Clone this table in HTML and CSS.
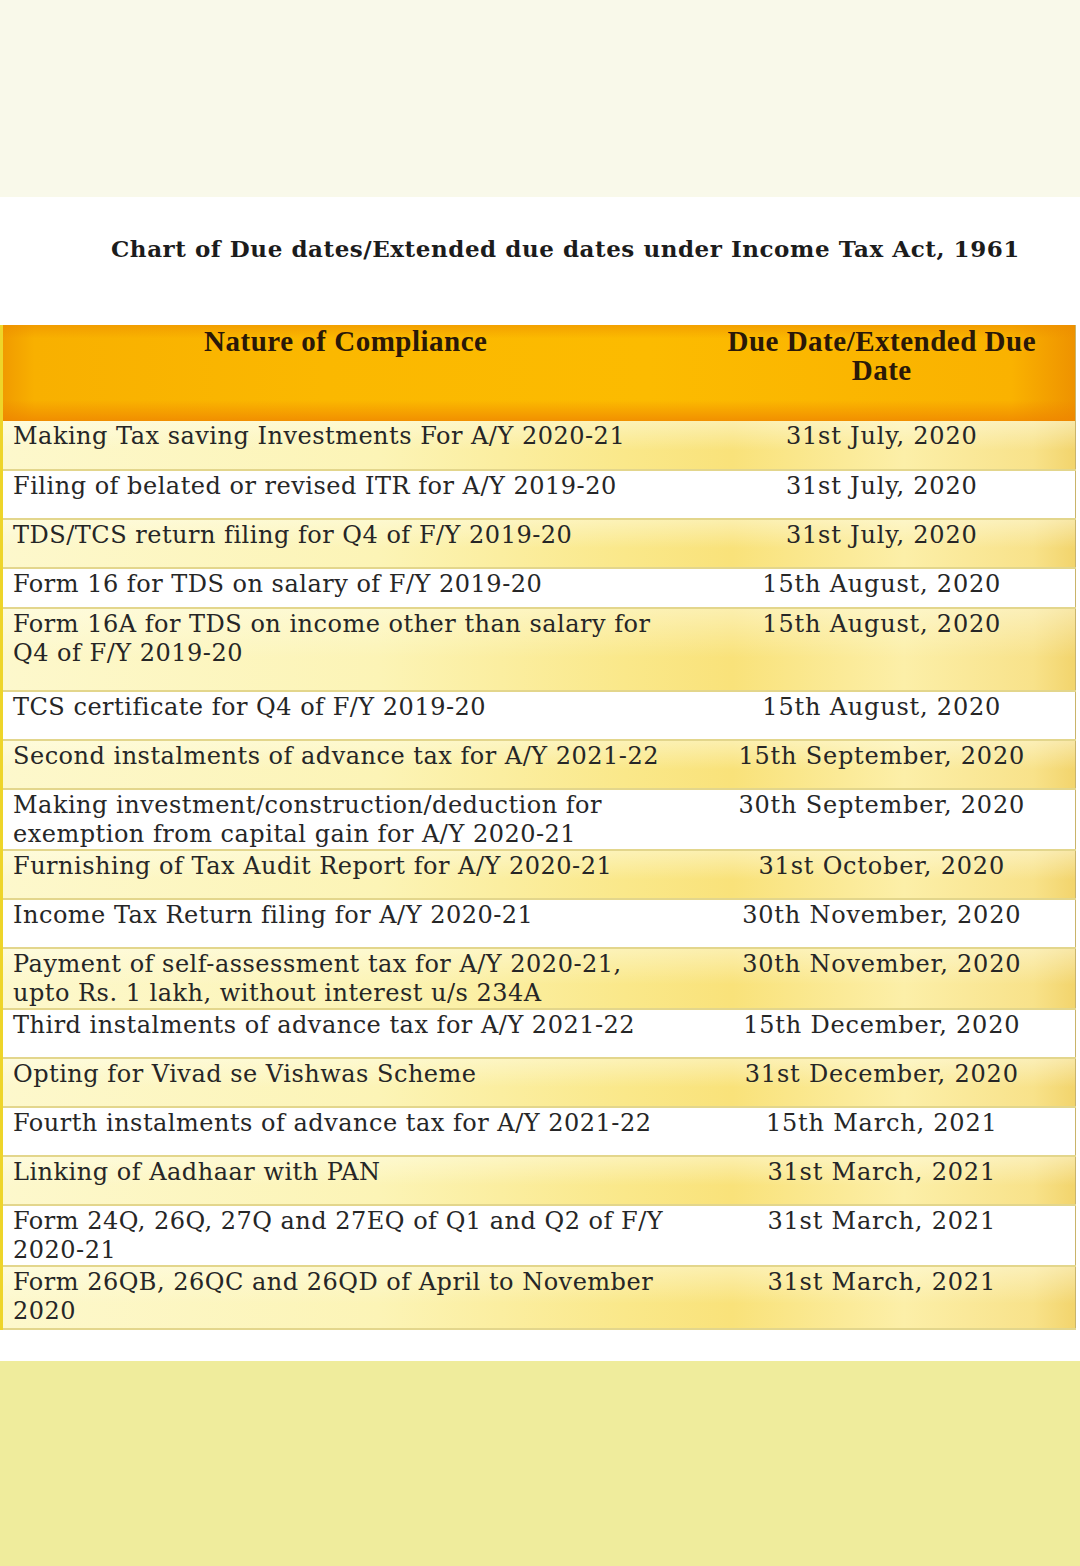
FILE: index.html
```html
<!DOCTYPE html>
<html lang="en">
<head>
<meta charset="utf-8">
<title>Chart of Due dates</title>
<link rel="stylesheet" href="styles.css">
</head>
<body>
<div class="page">
  <div class="top-band"></div>
  <div class="sheet">
    <h1 class="title">Chart of Due dates/Extended due dates under Income Tax Act, 1961</h1>
    <table class="chart">
      <thead>
        <tr class="head-row">
          <th class="col-nature">Nature of Compliance</th>
          <th class="col-date">Due Date/Extended Due Date</th>
        </tr>
      </thead>
      <tbody>
        <tr class="row yellow"><td>Making Tax saving Investments For A/Y 2020-21</td><td class="date">31st July, 2020</td></tr>
        <tr class="row white"><td>Filing of belated or revised ITR for A/Y 2019-20</td><td class="date">31st July, 2020</td></tr>
        <tr class="row yellow"><td>TDS/TCS return filing for Q4 of F/Y 2019-20</td><td class="date">31st July, 2020</td></tr>
        <tr class="row white short"><td>Form 16 for TDS on salary of F/Y 2019-20</td><td class="date">15th August, 2020</td></tr>
        <tr class="row yellow tall"><td>Form 16A for TDS on income other than salary for Q4 of F/Y 2019-20</td><td class="date">15th August, 2020</td></tr>
        <tr class="row white"><td>TCS certificate for Q4 of F/Y 2019-20</td><td class="date">15th August, 2020</td></tr>
        <tr class="row yellow"><td>Second instalments of advance tax for A/Y 2021-22</td><td class="date">15th September, 2020</td></tr>
        <tr class="row white two"><td>Making investment/construction/deduction for exemption from capital gain for A/Y 2020-21</td><td class="date">30th September, 2020</td></tr>
        <tr class="row yellow"><td>Furnishing of Tax Audit Report for A/Y 2020-21</td><td class="date">31st October, 2020</td></tr>
        <tr class="row white"><td>Income Tax Return filing for A/Y 2020-21</td><td class="date">30th November, 2020</td></tr>
        <tr class="row yellow two"><td>Payment of self-assessment tax for A/Y 2020-21, upto Rs. 1 lakh, without interest u/s 234A</td><td class="date">30th November, 2020</td></tr>
        <tr class="row white"><td>Third instalments of advance tax for A/Y 2021-22</td><td class="date">15th December, 2020</td></tr>
        <tr class="row yellow"><td>Opting for Vivad se Vishwas Scheme</td><td class="date">31st December, 2020</td></tr>
        <tr class="row white"><td>Fourth instalments of advance tax for A/Y 2021-22</td><td class="date">15th March, 2021</td></tr>
        <tr class="row yellow"><td>Linking of Aadhaar with PAN</td><td class="date">31st March, 2021</td></tr>
        <tr class="row white two"><td>Form 24Q, 26Q, 27Q and 27EQ of Q1 and Q2 of F/Y 2020-21</td><td class="date">31st March, 2021</td></tr>
        <tr class="row yellow two last"><td>Form 26QB, 26QC and 26QD of April to November 2020</td><td class="date">31st March, 2021</td></tr>
      </tbody>
    </table>
  </div>
  <div class="bottom-band"></div>
</div>
</body>
</html>
```

FILE: styles.css
```css
html, body {
  margin: 0;
  padding: 0;
}
body {
  width: 1080px;
  height: 1566px;
  overflow: hidden;
  background: #efec9c;
  font-family: "DejaVu Serif", "Liberation Serif", serif;
  color: #262626;
}
.page {
  display: flex;
  flex-direction: column;
  height: 1566px;
}
.top-band {
  height: 197px;
  background: #f9f9ea;
  flex: none;
}
.sheet {
  background: #ffffff;
  padding: 35px 4px 31px 0;
  flex: none;
}
.title {
  margin: 0 0 59px 111px;
  font-family: "DejaVu Serif", serif;
  font-weight: bold;
  font-size: 23px;
  line-height: 34px;
  color: #1c1c1c;
  letter-spacing: 0.55px;
  white-space: nowrap;
}
.chart {
  width: 1076px;
  border-collapse: collapse;
  border-left: 3px solid #eed52a;
  border-right: 1px solid #c9b46a;
  table-layout: fixed;
}
.col-nature {
  width: 687px;
}
.head-row th {
  height: 96px;
  padding: 2px 12px 0;
  vertical-align: top;
  font-family: "Liberation Serif", "Times New Roman", serif;
  font-weight: bold;
  font-size: 29px;
  line-height: 29px;
  letter-spacing: 0.5px;
  color: #2a1808;
  text-align: center;
  box-sizing: border-box;
}
.head-row {
  background:
    linear-gradient(to bottom, rgba(236, 140, 0, 0.55) 0, rgba(246, 170, 0, 0) 14%, rgba(246, 170, 0, 0) 78%, rgba(238, 130, 0, 0.75) 100%),
    linear-gradient(to right, #f09a00 0, #f8b000 3%, #fbb800 30%, #fcbb00 60%, #fab200 94%, #ee9200 100%);
}
.head-row .col-date {
  padding: 2px 14px 0 14px;
}
.row td {
  padding: 1px 10px 0 10px;
  vertical-align: top;
  font-size: 24px;
  line-height: 29px;
  letter-spacing: 0.5px;
  border-bottom: 2px solid #e3d68c;
}
.row td.date {
  text-align: center;
  padding: 1px 4px 0 4px;
  letter-spacing: 0.8px;
  white-space: nowrap;
}
.row {
  height: 49px;
}
.row.short {
  height: 40px;
}
.row.tall {
  height: 83px;
}
.row.two {
  height: 60px;
}
.row.last {
  height: 63px;
}
.yellow {
  background:
    linear-gradient(to bottom, rgba(255, 255, 240, 0.45) 0, rgba(255, 255, 240, 0) 60%),
    linear-gradient(to right, #fdf8cc 0%, #fcf4b6 35%, #fae88a 58%, #f9e27a 68%, #fcefa8 84%, #f8e28a 96%, #f2d46c 100%);
}
.white {
  background: #ffffff;
}
.bottom-band {
  flex: 1;
  background: #efec9c;
}
```
